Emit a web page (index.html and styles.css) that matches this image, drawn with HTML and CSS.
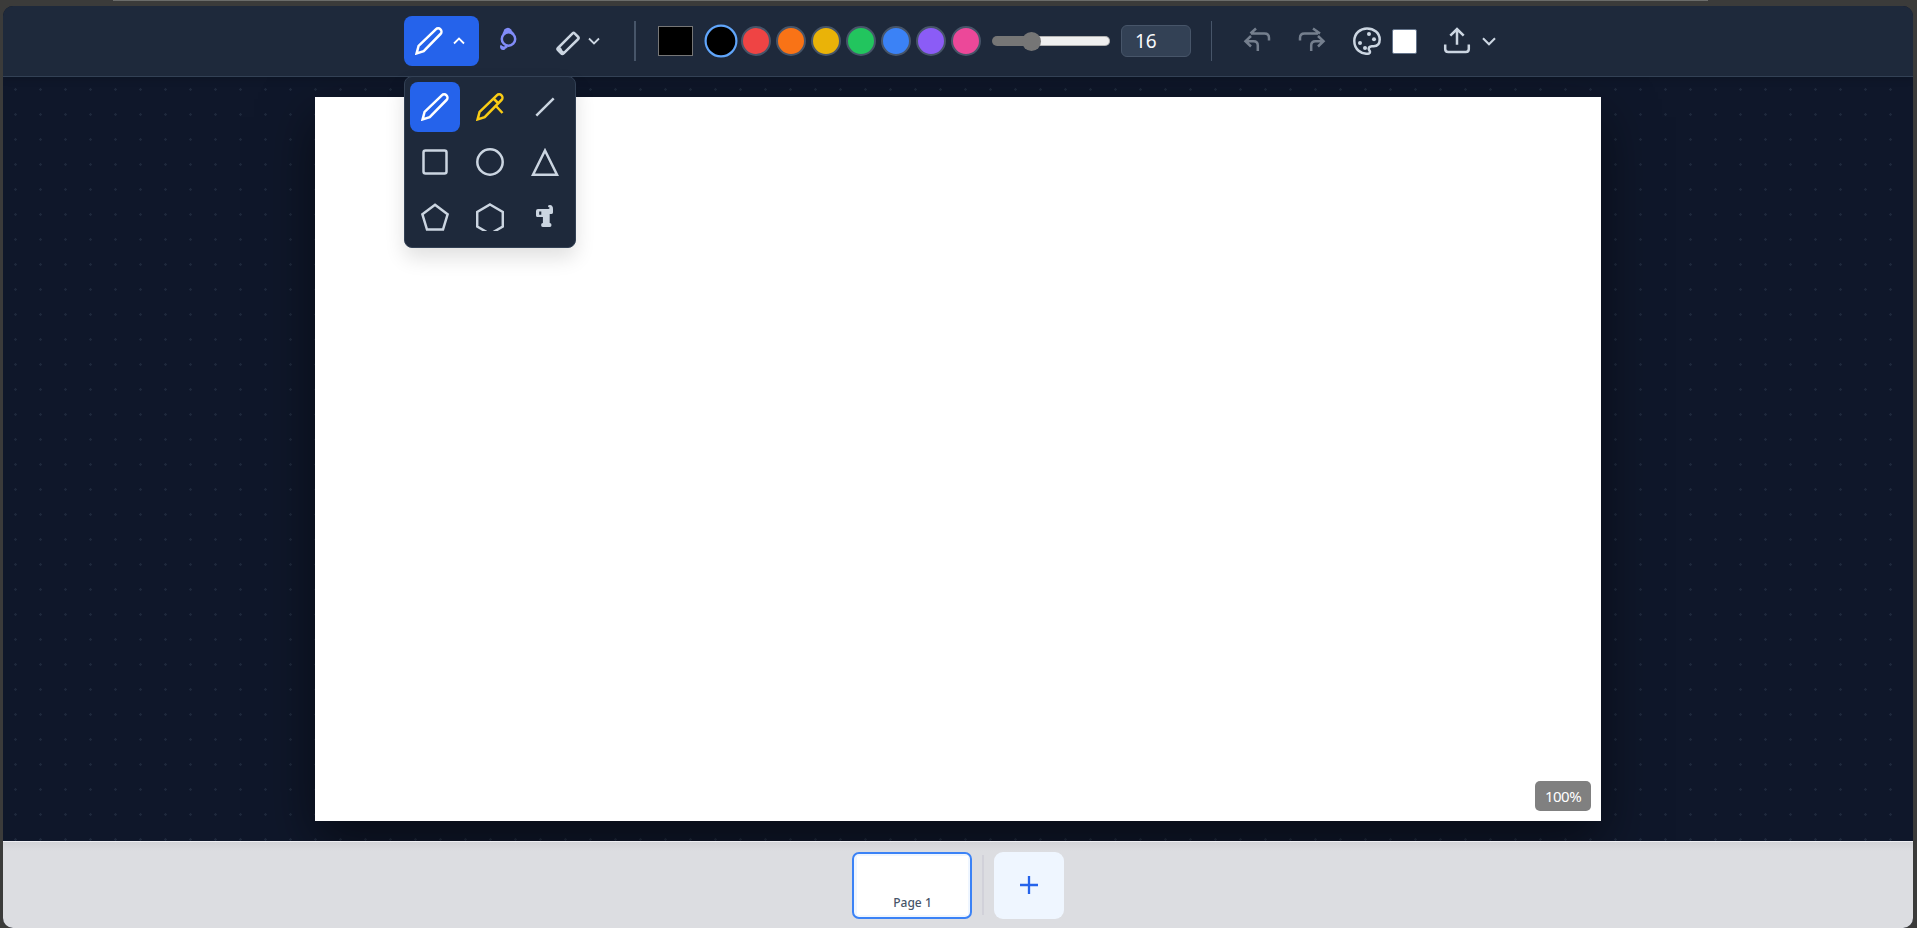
FILE: index.html
```html
<!DOCTYPE html>
<html lang="en">
<head>
<meta charset="utf-8">
<title>Whiteboard</title>
<link rel="stylesheet" href="styles.css">
</head>
<body>
<div class="window">
  <header class="toolbar">
    <div class="group tools">
      <button class="tool pen active" aria-label="Pen">
        <svg class="icon" viewBox="0 0 28 28"><path d="M1.600 26.400l2-7.600L20.800 2.300a3.300 3.300 0 0 1 4.700 4.700L8.700 24.200z"/></svg>
        <svg class="caret" viewBox="0 0 12 8"><path d="M1 6.500l5-5 5 5"/></svg>
      </button>
      <button class="tool lasso" aria-label="Lasso">
        <svg class="icon" viewBox="0 0 28 28"><circle cx="14.500" cy="13" r="6.700"/><path d="M9.800 8.500c0-2 1.200-2.500 1.500-4.200q2.700-2.400 5 0c.2 1.700 2 2 3 4M10.500 5.500h6.500M12.500 19.500c-1 3.200-3.800 4-5 2.200-.3-.8-.4-1.500.2-2.200M8 21q2.500 2 5-.8"/></svg>
      </button>
      <button class="tool eraser" aria-label="Eraser">
        <svg class="icon" viewBox="0 0 28 28"><path d="M4 20L18.600 5.400q1-1 2 0l3.600 3.600q1 1 0 2L9.600 25.300q-1.200 1.200-2.400 0L4 22.200q-1.100-1.100 0-2.200z"/><path class="solid" d="M4.500 18.500l2.500 1.200 1.600 3 2.600 1.500-3 2.300-5-4z"/></svg>
        <svg class="caret" viewBox="0 0 12 8"><path d="M1 1.500l5 5 5-5"/></svg>
      </button>
    </div>
    <i class="divider thick"></i>
    <span class="color-input"></span>
    <div class="swatches">
      <i class="swatch black selected"></i><i class="swatch red"></i><i class="swatch orange"></i><i class="swatch yellow"></i><i class="swatch green"></i><i class="swatch blue"></i><i class="swatch purple"></i><i class="swatch pink"></i>
    </div>
    <div class="slider"><i class="thumb"></i></div>
    <div class="size">16</div>
    <i class="divider"></i>
    <div class="group history">
      <svg class="icon faded" viewBox="0 0 28 28"><path d="M26 13.500V11q0-4.500-4.500-4.500H8M13 1.500L7.500 6.500M8 9L2.500 14.200 8 19.500M3 14.200h7.500q4.300 0 4.300 4.300V24"/></svg>
      <svg class="icon faded" viewBox="0 0 28 28"><path d="M2 13.500V11q0-4.500 4.500-4.500H20M15 1.500l7 5M20 9l5.500 5.200L20 19.500M25 14.200h-7.500q-4.300 0-4.300 4.300V24"/></svg>
    </div>
    <svg class="icon palette" viewBox="0 0 28 28"><path d="M16 26.500C8 28 1.300 22 1.300 14S7.500 1.500 14 1.500c7 0 12.700 4.500 12.700 11 0 4.500-2.500 6.700-6 6.700h-2q-2.800.3-3 2.500c0 1.600 1.300 2 1.300 3.200q0 1-1 1.600z"/><g class="solid"><circle cx="16" cy="7" r="2"/><circle cx="21" cy="12.200" r="2"/><circle cx="7" cy="16" r="2"/><circle cx="12" cy="21" r="2"/></g></svg>
    <span class="paper"></span>
    <svg class="icon export" viewBox="0 0 28 28"><path d="M2.200 17.500V22q0 3 3 3h17.600q3 0 3-3v-4.500M14 17.700V2.500M7.300 8.700L14 2l6.700 6.700"/></svg>
    <svg class="caret large" viewBox="0 0 14 9"><path d="M1 1.200l6 6 6-6"/></svg>
    <div class="menu">
      <button class="cell active" aria-label="Pen"><svg class="icon" viewBox="0 0 28 28"><path d="M1.600 26.400l2-7.600L20.800 2.300a3.300 3.300 0 0 1 4.700 4.700L8.700 24.200z"/></svg></button>
      <button class="cell marker" aria-label="Highlighter"><svg class="icon" viewBox="0 0 28 28"><path d="M1.600 26.400l2-7.600L20.800 2.300a3.300 3.300 0 0 1 4.700 4.700L8.700 24.200zM17.500 5.500l5 5M20 13l6.500 7"/></svg></button>
      <button class="cell" aria-label="Line"><svg class="icon" viewBox="0 0 28 28"><path d="M5.300 22.700L22.700 5.300"/></svg></button>
      <button class="cell" aria-label="Square"><svg class="icon" viewBox="0 0 28 28"><rect x="2.500" y="2.500" width="23" height="23" rx="2"/></svg></button>
      <button class="cell" aria-label="Circle"><svg class="icon" viewBox="0 0 28 28"><circle cx="14" cy="14" r="12.700"/></svg></button>
      <button class="cell" aria-label="Triangle"><svg class="icon" viewBox="0 0 28 28"><path d="M14 2.500L26 26.700H2z"/></svg></button>
      <button class="cell" aria-label="Pentagon"><svg class="icon" viewBox="0 0 28 28"><path d="M14 1.700l12.600 9.600-4.600 15.200H6L1.400 11.300z"/></svg></button>
      <button class="cell" aria-label="Hexagon"><svg class="icon" viewBox="0 0 28 28"><path d="M14 1.500L26.800 9v14.500L14 31 1.200 23.500V9z"/></svg></button>
      <button class="cell" aria-label="Text"><svg class="icon" viewBox="0 0 28 28"><path class="solid" fill-rule="evenodd" d="M7 6h10.500q1.400-.2 1-1.500-1.800-.2-1.500-1.500.3-1 2-1 3 .3 3 4v3.500q-.2 1.500-1.700 1.500H18.700v9q1.800.2 1.800 2t-1.600 2h-7.200q-1.600-.2-1.600-2t1.800-2V14H6.500Q5 14 5 12.500V8q0-2 2-2zM8.200 8.500v3.300h2.100V8.500z"/></svg></button>
    </div>
  </header>
  <main class="workspace">
    <div class="canvas"><span class="zoom">100%</span></div>
  </main>
  <footer class="pages">
    <div class="page"><div class="preview">Page 1</div></div>
    <i class="page-divider"></i>
    <button class="add" aria-label="Add page"><svg viewBox="0 0 20 20"><path d="M10 1v18M1 10h18"/></svg></button>
  </footer>
</div>
</body>
</html>
```

FILE: styles.css
```css
* { box-sizing: border-box; }
body {
  margin: 0;
  height: 928px;
  padding: 6px 4px 0 3px;
  overflow: hidden;
  background: linear-gradient(#6b6c6a, #6b6c6a) 113px 0 / 1595px 1px no-repeat, #3b3b3a;
  font-family: "Noto Sans", sans-serif;
}
button { border: 0; padding: 0; background: none; font: inherit; }
.window {
  display: flex;
  flex-direction: column;
  height: 922px;
  border-radius: 10px;
  overflow: hidden;
  background: #0f172a;
}
.toolbar {
  position: relative;
  z-index: 2;
  display: flex;
  align-items: center;
  flex: 0 0 71px;
  padding-left: 401px;
  background: #1e293b;
  border-bottom: 1px solid #334155;
  box-shadow: 0 4px 6px rgba(0, 0, 0, .1);
  color: #cbd5e1;
}
.group { display: flex; align-items: center; }
.icon { display: block; flex: none; width: 28px; height: 28px; }
.icon, .caret { fill: none; stroke: currentColor; stroke-width: 2.5; }
.icon .solid { fill: currentColor; stroke: none; }
.caret { flex: none; width: 12px; height: 8px; stroke-width: 1.8; }
.caret.large { width: 14px; height: 9px; margin-left: 11px; stroke-width: 2.1; margin-top: 1px; }
.tool { display: flex; align-items: center; height: 50px; border-radius: 8px; color: #cbd5e1; }
.active { background: #2563eb; color: #fff; }
.pen { width: 75px; padding-left: 11px; gap: 10px; }
.pen .caret { margin-bottom: 1px; }
.lasso { width: 50px; margin-left: 5px; padding-left: 10px; padding-bottom: 3px; color: #818cf8; }
.eraser { width: 75px; margin-left: 5px; padding-left: 15px; gap: 6px; }
.eraser .icon { margin-top: 1px; }
.divider { width: 1px; height: 40px; background: #475569; margin-left: 20px; }
.divider.thick { width: 2px; }
.color-input { width: 35px; height: 30px; margin-left: 22px; background: #000; border: 1px solid #767676; }
.swatches { display: flex; gap: 5px; margin-left: 13px; }
.swatch { width: 30px; height: 30px; border: 2px solid #475569; border-radius: 50%; }
.selected { border-color: #60a5fa; transform: scale(1.1); }
.black { background: #000; }
.red { background: #ef4444; }
.orange { background: #f97316; }
.yellow { background: #eab308; }
.green { background: #22c55e; }
.blue { background: #3b82f6; }
.purple { background: #8b5cf6; }
.pink { background: #ec4899; }
.slider {
  display: flex;
  align-items: center;
  width: 118px;
  height: 10px;
  margin-left: 11px;
  padding-left: 29.5px;
  border-radius: 5px;
  background: linear-gradient(90deg, #767676 39px, transparent 39px), #efefef;
  box-shadow: inset 0 0 0 1px rgba(118, 118, 118, .5);
}
.thumb { flex: none; width: 19px; height: 19px; border-radius: 50%; background: #767676; }
.size {
  width: 70px;
  height: 32px;
  margin-left: 11px;
  padding-left: 13px;
  border: 1px solid #475569;
  border-radius: 6px;
  background: #334155;
  color: #f8fafc;
  font-size: 19px;
  line-height: 31px;
}
.history { gap: 27px; margin-left: 31px; }
.faded { opacity: .5; }
.palette { margin-left: 27px; }
.paper { width: 25px; height: 25px; margin: 1px 0 0 11px; border: 1px solid #64748b; border-radius: 2px; background: #fff; }
.export { margin-left: 26px; }
.menu {
  position: absolute;
  left: 401px;
  top: 70px;
  display: grid;
  grid-template-columns: repeat(3, 50px);
  grid-auto-rows: 50px;
  gap: 5px;
  padding: 5px;
  border: 1px solid #334155;
  border-radius: 8px;
  background: #1e293b;
  box-shadow: 0 10px 20px rgba(0, 0, 0, .12);
}
.cell { display: grid; place-items: center; border-radius: 8px; color: #cbd5e1; }
.cell.active { color: #fff; }
.cell.marker { color: #facc15; }
.workspace {
  flex: 1;
  min-height: 0;
  padding: 20px 312px;
  background: radial-gradient(circle, rgba(51, 65, 85, .4) 1px, transparent 1.5px) 0 0 / 25px 25px, #0f172a;
}
.canvas {
  display: flex;
  align-items: flex-end;
  justify-content: flex-end;
  height: 724px;
  padding: 10px;
  background: #fff;
  box-shadow: 0 20px 50px rgba(0, 0, 0, .5);
}
.zoom { width: 56px; height: 30px; border-radius: 5px; background: #808080; color: #fff; font-size: 15px; letter-spacing: -.5px; line-height: 30px; text-align: center; }
.pages {
  position: relative;
  display: flex;
  align-items: flex-start;
  justify-content: center;
  flex: 0 0 87px;
  padding: 10px 0 0;
  border-top: 1px solid #eeeef2;
  background: linear-gradient(#d2d3d7, #dcdde1 9px);
}
.page { width: 120px; height: 67px; border: 2px solid #3b82f6; border-radius: 7px; background: #eff6ff; padding: 2px 2px 2px 3px; }
.preview { height: 59px; background: #fff; color: #475569; font-size: 12px; font-weight: 500; line-height: 16px; padding-top: 39px; text-align: center; }
.page-divider { width: 2px; height: 60px; margin: 3px 10px 0; background: #d1d1d9; }
.add { display: grid; place-items: center; width: 70px; height: 67px; padding-bottom: 1px; border-radius: 9px; background: #eff6ff; }
.add svg { width: 20px; height: 20px; fill: none; stroke: #2563eb; stroke-width: 2.3; }
```
